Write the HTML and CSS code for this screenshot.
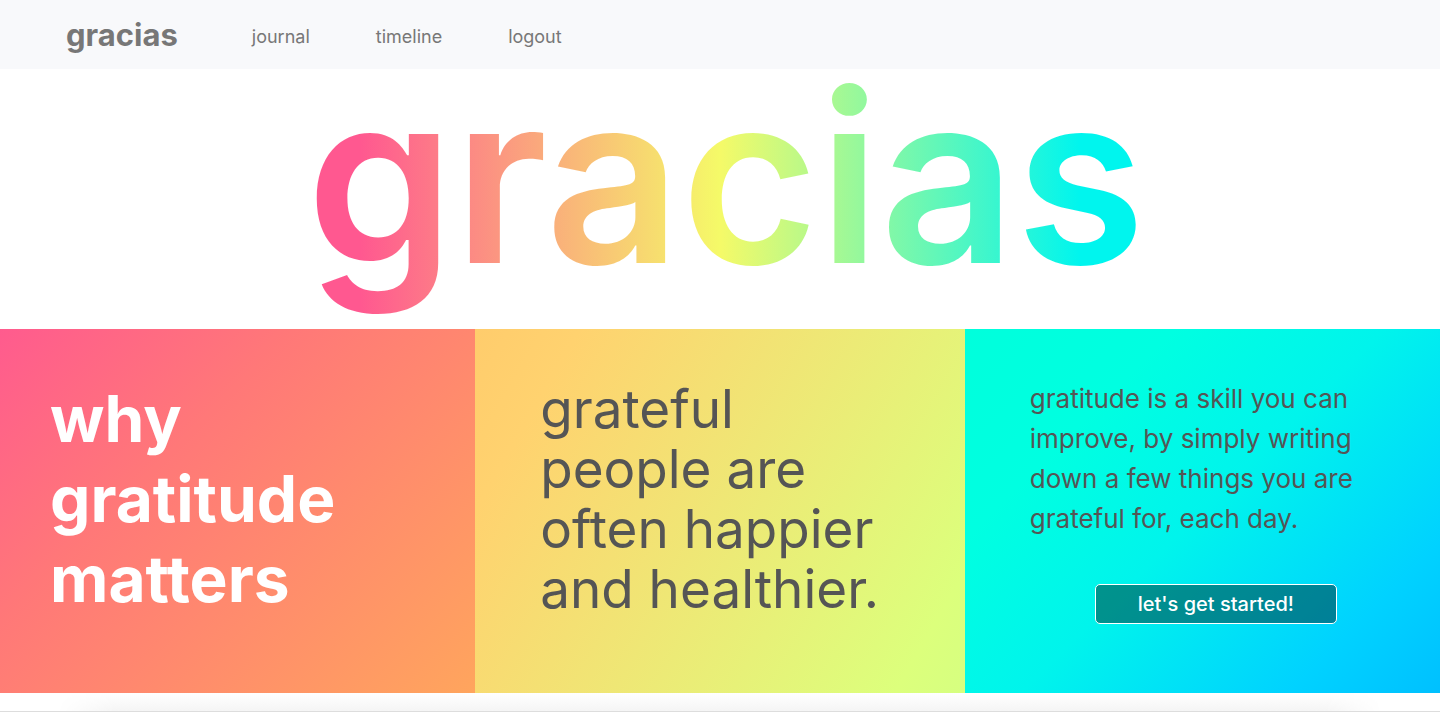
FILE: index.html
```html
<!DOCTYPE html>
<html lang="en">
<head>
<meta charset="utf-8">
<meta name="viewport" content="width=device-width, initial-scale=1">
<title>gracias</title>
<link rel="stylesheet" href="styles.css">
</head>
<body>
<nav class="nav">
  <a class="brand" href="#">gracias</a>
  <a class="nav-link" href="#journal">journal</a>
  <a class="nav-link" href="#timeline">timeline</a>
  <a class="nav-link" href="#logout">logout</a>
</nav>
<main>
  <h1 class="hero">gracias</h1>
  <div class="panels">
    <section class="panel panel-why">
      <h2 class="why">why<br>gratitude<br>matters</h2>
    </section>
    <section class="panel panel-people">
      <p class="people">grateful<br>people are<br>often happier<br>and healthier.</p>
    </section>
    <section class="panel panel-skill">
      <p class="skill">gratitude is a skill you can<br>improve, by simply writing<br>down a few things you are<br>grateful for, each day.</p>
      <button class="start" type="button">let's get started!</button>
    </section>
  </div>
</main>
<footer class="footer"><div class="footer-shade"></div></footer>
</body>
</html>
```
FILE: styles.css
```css
* {
  box-sizing: border-box;
}

body {
  margin: 0;
  background: #fff;
  color: #555;
  font-family: Inter, "Liberation Sans", sans-serif;
}

.nav {
  display: flex;
  align-items: flex-end;
  gap: 66px;
  padding: 15px 66px;
  background: #f8f9fb;
}

.brand,
.nav-link {
  color: #777;
  text-decoration: none;
}

.brand {
  margin-right: 8px;
  font-size: 31px;
  line-height: 39px;
  font-weight: 700;
}

.nav-link {
  font-size: 18px;
  line-height: 34px;
}

.hero {
  margin: 0;
  padding: 0 0 44px 12px;
  font-size: 236px;
  line-height: 216px;
  font-weight: 600;
  text-align: center;
  color: transparent;
  background: linear-gradient(90deg, #ff5890 25%, #f5fa68 50%, #00f5ee 75%);
  -webkit-background-clip: text;
  background-clip: text;
}

.panels {
  display: grid;
  grid-template-columns: 33fr 34fr 33fr;
}

.panel {
  padding: 50px 65px 69px;
}

.panel-why {
  padding-left: 50px;
  background: linear-gradient(135deg, #ff5b8e, #ff7878 35%, #ffa55d);
}

.panel-people {
  background: linear-gradient(120deg, #ffcc6c, #ffd26f 15%, #dcff7c 90%, #d6ff80);
}

.panel-skill {
  background: linear-gradient(135deg, #00ffdc, #00ffe1 25%, #00f4ec 50%, #00d2ff 82%, #00c0ff);
}

.why {
  margin: 0;
  color: #fff;
  font-size: 64px;
  line-height: 80px;
  font-weight: 700;
}

.people {
  margin: 0;
  font-size: 53px;
  line-height: 60px;
}

.skill {
  margin: 0 0 45px;
  font-size: 26px;
  line-height: 40px;
  white-space: nowrap;
}

.start {
  display: block;
  width: 242px;
  height: 40px;
  margin-left: 65px;
  padding: 0;
  border: 1px solid #fff;
  border-radius: 5px;
  background: rgba(0, 0, 0, 0.4);
  color: #fff;
  font: 500 20px/30px Inter, "Liberation Sans", sans-serif;
}

.footer {
  border-bottom: 1px solid #ddd;
}

.footer-shade {
  height: 18px;
  background: linear-gradient(#fff, #f5f5f5);
  -webkit-mask-image: linear-gradient(90deg, transparent 4%, #000 8%, #000 92%, transparent 96%);
  mask-image: linear-gradient(90deg, transparent 4%, #000 8%, #000 92%, transparent 96%);
}
```
